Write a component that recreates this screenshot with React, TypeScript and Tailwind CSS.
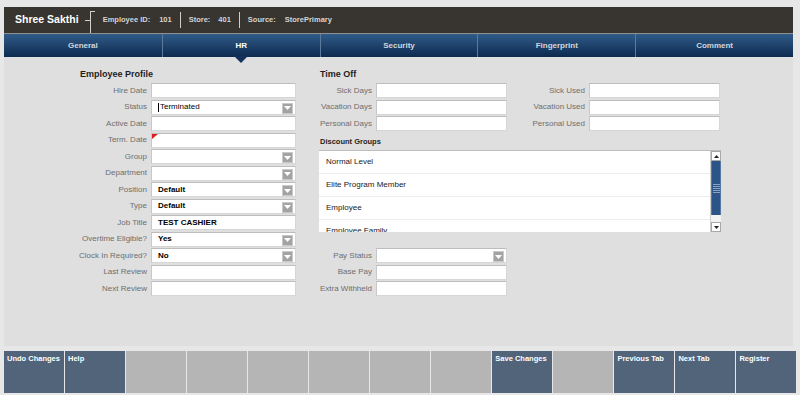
import React from "react";

const font = { fontFamily: '"Liberation Sans", Arial, sans-serif' };

function Arrow() {
  return (
    <div className="absolute right-[2px] top-[2px] w-[11px] h-[11px] bg-[#a3a3a3] border border-[#c9c9c9] flex items-center justify-center">
      <svg width="7" height="4" viewBox="0 0 7 4">
        <path d="M0 0 H7 L3.5 4 Z" fill="#fff" />
      </svg>
    </div>
  );
}

function Field({
  label,
  value,
  select,
  caret,
  flag,
  labelW,
  inputW,
}: {
  label: string;
  value?: string;
  select?: boolean;
  caret?: boolean;
  flag?: boolean;
  labelW: string;
  inputW: string;
}) {
  return (
    <div className="flex items-center h-[15px] gap-[4px]">
      <div className={`${labelW} text-right text-[8px] text-[#6e6e6e] whitespace-nowrap`}>{label}</div>
      <div className={`${inputW} relative h-[15px] bg-white border border-[#d6d6d6] border-t-[#bdbdbd] border-l-[#c8c8c8] flex items-center pl-[6px] text-[8px] text-black`}>
        {caret && <span className="w-px h-[9px] bg-black mr-[1px]" />}
        <span className={caret ? "" : "font-bold"}>{value}</span>
        {flag && (
          <svg className="absolute left-0 top-0" width="6" height="5" viewBox="0 0 6 5">
            <path d="M0 0 H6 L0 5 Z" fill="#e02020" />
          </svg>
        )}
        {select && <Arrow />}
      </div>
    </div>
  );
}

export default function App() {
  const left = [
    { label: "Hire Date" },
    { label: "Status", value: "Terminated", select: true, caret: true },
    { label: "Active Date" },
    { label: "Term. Date", flag: true },
    { label: "Group", select: true },
    { label: "Department", select: true },
    { label: "Position", value: "Default", select: true },
    { label: "Type", value: "Default", select: true },
    { label: "Job Title", value: "TEST CASHIER" },
    { label: "Overtime Eligible?", value: "Yes", select: true },
    { label: "Clock In Required?", value: "No", select: true },
    { label: "Last Review" },
    { label: "Next Review" },
  ];

  const buttons = [
    "Undo Changes",
    "Help",
    "",
    "",
    "",
    "",
    "",
    "",
    "Save Changes",
    "",
    "Previous Tab",
    "Next Tab",
    "Register",
  ];

  const tabs = ["General", "HR", "Security", "Fingerprint", "Comment"];

  return (
    <div className="w-[800px] h-[395px] bg-[#e7e7e7] overflow-hidden pt-[7px] pl-[4px]" style={font}>
      {/* header */}
      <div className="w-[789px] h-[26px] bg-[#38342f] flex items-center pl-[11px] text-[#d4d4d4] font-bold">
        <span className="text-white text-[10.5px]">Shree Sakthi</span>
        <svg className="ml-[6px]" width="12" height="26" viewBox="0 0 12 26">
          <path d="M0 13.5 H5 M5.5 4 V26 M5 4.5 H10" stroke="#cfcfcf" strokeWidth="1" fill="none" />
        </svg>
        <span className="ml-[6px] text-[7.5px]">Employee ID:</span>
        <span className="ml-[9px] text-[7.5px]">101</span>
        <span className="ml-[8px] w-px h-[16px] bg-[#cfcfcf]" />
        <span className="ml-[8px] text-[7.5px]">Store:</span>
        <span className="ml-[8px] text-[7.5px]">401</span>
        <span className="ml-[8px] w-px h-[16px] bg-[#cfcfcf]" />
        <span className="ml-[8px] text-[7.5px]">Source:</span>
        <span className="ml-[9px] text-[7.5px]">StorePrimary</span>
      </div>

      {/* tabs */}
      <div className="w-[789px] h-[24px] border-t border-[#8f8f8f] bg-gradient-to-b from-[#315c89] to-[#0d2a4f] grid grid-cols-5">
        {tabs.map((t, i) => (
          <div
            key={t}
            className={`relative flex items-center justify-center pt-[1px] text-[8px] font-bold ${i > 0 ? "border-l border-[#5b7a9d]" : ""} ${t === "HR" ? "text-white" : "text-[#d2d6dc]"}`}
          >
            {t}
            {t === "HR" && (
              <svg className="absolute left-1/2 -translate-x-1/2 top-[22px]" width="14" height="7" viewBox="0 0 14 7">
                <path d="M0 0 H14 L7 7 Z" fill="#12305a" />
              </svg>
            )}
          </div>
        ))}
      </div>

      {/* panel */}
      <div className="w-[789px] h-[289px] bg-[#dfdfdf] flex pt-[11px]">
        {/* left column */}
        <div className="ml-[71px] w-[224px] flex flex-col">
          <div className="h-[15px] pl-[5px] text-[9px] font-bold text-[#1e1e1e] flex items-start">Employee Profile</div>
          <div className="flex flex-col gap-[1.5px]">
            {left.map((f) => (
              <Field key={f.label} {...f} labelW="w-[72px]" inputW="w-[145px]" />
            ))}
          </div>
        </div>

        {/* right area */}
        <div className="ml-[20px] w-[402px] flex flex-col">
          <div className="h-[15px] pl-[1px] text-[9px] font-bold text-[#1e1e1e] flex items-start">Time Off</div>
          <div className="flex gap-[13px]">
            <div className="flex flex-col gap-[1.5px]">
              <Field label="Sick Days" labelW="w-[53px]" inputW="w-[131px]" />
              <Field label="Vacation Days" labelW="w-[53px]" inputW="w-[131px]" />
              <Field label="Personal Days" labelW="w-[53px]" inputW="w-[131px]" />
            </div>
            <div className="flex flex-col gap-[1.5px]">
              <Field label="Sick Used" labelW="w-[65px]" inputW="w-[131px]" />
              <Field label="Vacation Used" labelW="w-[65px]" inputW="w-[131px]" />
              <Field label="Personal Used" labelW="w-[65px]" inputW="w-[131px]" />
            </div>
          </div>
          <div className="h-[19px] pl-[1px] pt-[2px] flex items-center text-[7.5px] font-bold text-[#1e1e1e]">Discount Groups</div>
          <div className="h-[82px] w-[402px] flex bg-white border-t border-[#bdbdbd] overflow-hidden">
            <div className="flex-1 flex flex-col text-[8px] text-[#1a1a1a]">
              {["Normal Level", "Elite Program Member", "Employee", "Employee Family"].map((g) => (
                <div key={g} className="h-[23px] shrink-0 flex items-center pl-[7px] border-b border-[#ececec]">
                  {g}
                </div>
              ))}
            </div>
            <div className="w-[11px] flex flex-col border-l border-[#cfcfcf]">
              <div className="h-[10px] bg-white border border-[#a8a8a8] flex items-center justify-center">
                <svg width="5" height="3" viewBox="0 0 5 3">
                  <path d="M0 3 H5 L2.5 0 Z" fill="#222" />
                </svg>
              </div>
              <div className="h-[54px] bg-[#2d5486] border-x border-[#5578a2] flex flex-col items-center justify-center gap-[1px]">
                {[0, 1, 2, 3, 4].map((i) => (
                  <div key={i} className="w-[7px] h-px bg-[#8aa3c2]" />
                ))}
              </div>
              <div className="flex-1 bg-[#f2f2f2]" />
              <div className="h-[10px] bg-white border border-[#a8a8a8] flex items-center justify-center">
                <svg width="5" height="3" viewBox="0 0 5 3">
                  <path d="M0 0 H5 L2.5 3 Z" fill="#222" />
                </svg>
              </div>
            </div>
          </div>
          <div className="mt-[16px] flex flex-col gap-[1.5px]">
            <Field label="Pay Status" select labelW="w-[53px]" inputW="w-[131px]" />
            <Field label="Base Pay" labelW="w-[53px]" inputW="w-[131px]" />
            <Field label="Extra Withheld" labelW="w-[53px]" inputW="w-[131px]" />
          </div>
        </div>
      </div>

      {/* bottom buttons */}
      <div className="mt-[5px] w-[792px] h-[42px] grid grid-cols-[repeat(13,minmax(0,1fr))] gap-[1.5px]">
        {buttons.map((b, i) => (
          <div
            key={i}
            className={`${b ? "bg-[#516479] text-white" : "bg-[#b5b5b5]"} text-[7.5px] font-bold pl-[3px] pt-[2px]`}
          >
            {b}
          </div>
        ))}
      </div>
    </div>
  );
}
